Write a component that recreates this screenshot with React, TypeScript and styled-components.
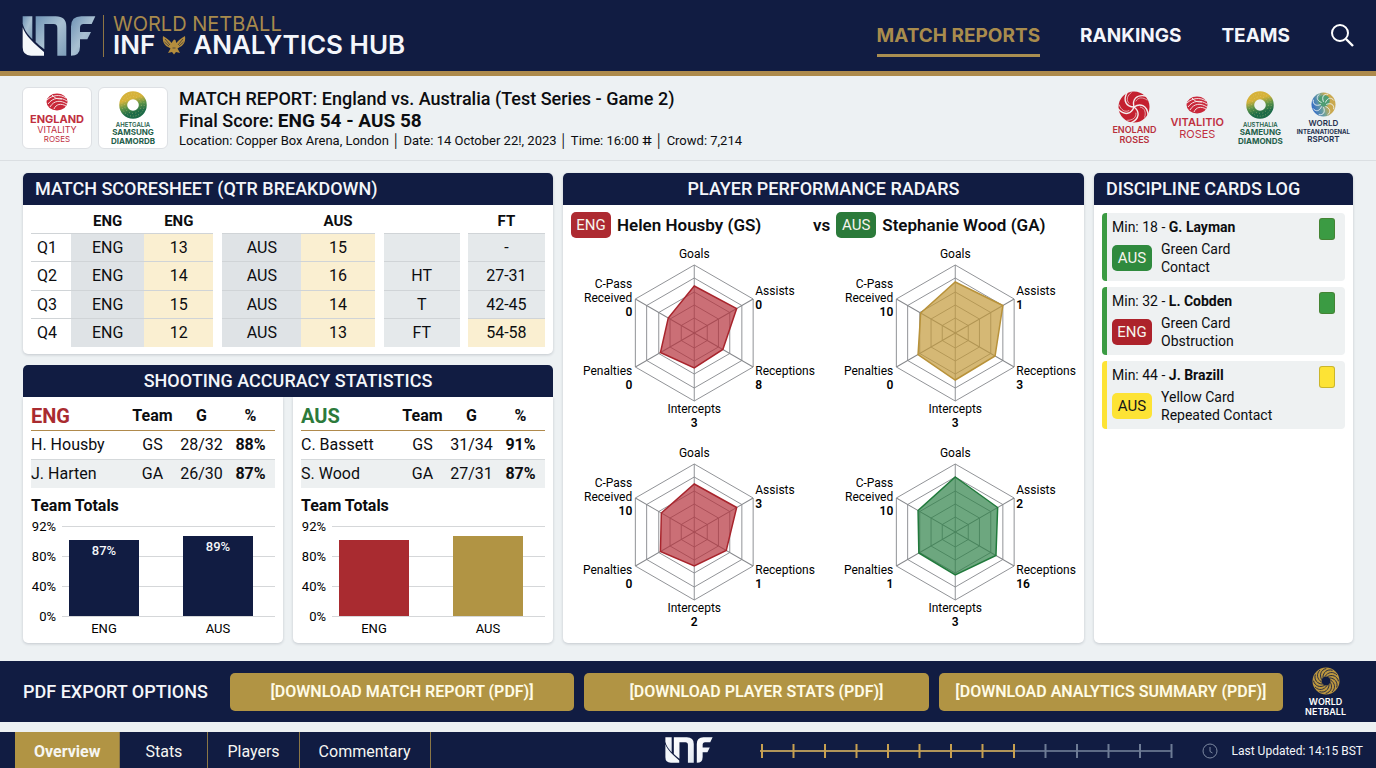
import { ReactNode } from 'react'
import styled, { createGlobalStyle } from 'styled-components'

const NAVY = '#111c42'
const GOLD = '#b19444'
const RED = '#a92b30'
const GREEN = '#2c7a3b'

const quarters = [
  { q: 'Q1', eng: '13', aus: '15', label: '', score: '-' },
  { q: 'Q2', eng: '14', aus: '16', label: 'HT', score: '27-31' },
  { q: 'Q3', eng: '15', aus: '14', label: 'T', score: '42-45' },
  { q: 'Q4', eng: '12', aus: '13', label: 'FT', score: '54-58' },
]

const shooting = [
  {
    team: 'ENG',
    color: RED,
    rows: [
      { name: 'H. Housby', pos: 'GS', goals: '28/32', pct: '88%' },
      { name: 'J. Harten', pos: 'GA', goals: '26/30', pct: '87%' },
    ],
    bars: [
      { name: 'ENG', height: 76, label: '87%', color: NAVY },
      { name: 'AUS', height: 80, label: '89%', color: NAVY },
    ],
  },
  {
    team: 'AUS',
    color: GREEN,
    rows: [
      { name: 'C. Bassett', pos: 'GS', goals: '31/34', pct: '91%' },
      { name: 'S. Wood', pos: 'GA', goals: '27/31', pct: '87%' },
    ],
    bars: [
      { name: 'ENG', height: 76, label: '', color: RED },
      { name: 'AUS', height: 80, label: '', color: GOLD },
    ],
  },
]

// order: goals, assists, receptions, intercepts, penalties, c-pass
const radars = [
  { color: '#a8252d', fill: '#b5323c', radii: [47, 49, 33, 35, 39, 30], values: [0, 8, 3, 0, 0] },
  { color: '#b8923a', fill: '#c39a3a', radii: [51, 55, 46, 47, 43, 40], values: [1, 3, 3, 0, 10] },
  { color: '#a8252d', fill: '#b5323c', radii: [48, 49, 37, 34, 39, 38], values: [3, 1, 2, 0, 10] },
  { color: '#217a3c', fill: '#2f8149', radii: [55, 49, 47, 43, 42, 43], values: [2, 16, 3, 1, 10] },
]

const cards = [
  { min: 18, player: 'G. Layman', team: 'AUS', badge: '#2f8a3e', card: '#3b9b43', type: 'Green Card', reason: 'Contact' },
  { min: 32, player: 'L. Cobden', team: 'ENG', badge: '#ad222b', card: '#3b9b43', type: 'Green Card', reason: 'Obstruction' },
  { min: 44, player: 'J. Brazill', team: 'AUS', badge: '#fde335', card: '#fde335', type: 'Yellow Card', reason: 'Repeated Contact', dark: true },
]

const downloads = [
  '[DOWNLOAD MATCH REPORT (PDF)]',
  '[DOWNLOAD PLAYER STATS (PDF)]',
  '[DOWNLOAD ANALYTICS SUMMARY (PDF)]',
]

function InfLogo ({ width, height, light }: { width: number, height: number, light?: boolean }) {
  const id = light ? 'inf-light' : 'inf-steel'
  return (
    <svg width={width} height={height} viewBox="66 42 220 120" role="img" aria-label="INF">
      <defs>
        <linearGradient id={id} x1="0" y1="0" x2="1" y2="1">
          <stop offset="0" stopColor={light ? '#ffffff' : '#6f93b5'} />
          <stop offset="0.5" stopColor={light ? '#f2f5fa' : '#a9c0d2'} />
          <stop offset="1" stopColor={light ? '#dfe6ef' : '#7d9db9'} />
        </linearGradient>
      </defs>
      <path fill={`url(#${id})`} d="M67 43H96V112C82 98 70 82 67 64Z" />
      <path fill="#f4f7fa" d="M67 76C74 100 104 128 131 150V161H92Q67 161 67 136Z" />
      <path fill={`url(#${id})`} d="M106 43H166Q198 43 198 74V161H171V78Q171 66 160 66H132V142C122 134 112 126 106 120Z" />
      <path fill={`url(#${id})`} d="M285 43L274 66H250Q239 66 239 78V90H272L261 112H239V134Q239 161 212 161V74Q212 43 243 43Z" />
    </svg>
  )
}

function Eagle () {
  return (
    <svg width="24" height="20" viewBox="0 0 24 20" fill="#b58d3d" aria-hidden="true">
      <path d="M1 1C4 3 8 5 9.500 8L10.500 6.500L12 4.500L13.500 5L14 7L14.500 8C16 5 20 3 23 1C24 7 21 11 17 12.500L15.500 13.500L18 18L14 17L12 19.500L10 17L6 18L8.500 13.500L7 12.500C3 11 0 7 1 1Z" />
      <path stroke={NAVY} strokeWidth="0.6" fill="none" d="M3 4L8 10M2.500 7L7 11M21 4L16 10M21.500 7L17 11M10.500 13H13.500" />
    </svg>
  )
}

function Rose () {
  return (
    <svg width="32" height="32" viewBox="0 0 32 32" aria-hidden="true">
      <circle cx="16" cy="16" r="15.500" fill="#c4202f" />
      {[0, 72, 144, 216, 288].map(a => (
        <g key={a} transform={`rotate(${a} 16 16)`} fill="none" stroke="#f4eeee" strokeLinecap="round">
          <path strokeWidth="1.400" d="M16 16C14 9 18 3 28 5" />
          <path strokeWidth="0.600" d="M18 10C20 6 25 6 29 9" />
        </g>
      ))}
    </svg>
  )
}

function Bud () {
  return (
    <svg width="22" height="18" viewBox="0 0 22 18" aria-hidden="true">
      <ellipse cx="11" cy="9" rx="10.500" ry="8.500" fill="#c9283a" />
      <g fill="none" stroke="#f7f0f0" strokeWidth="0.900">
        <path d="M1 7C6 2 14 1 20 5" />
        <path d="M2 11C7 4 15 4 21 8" />
        <path d="M4 14C8 7 15 7 21 11" />
        <path d="M8 16C10 11 15 10 20 13" />
        <path d="M6 2C9 5 10 6 16 6" />
      </g>
    </svg>
  )
}

function Diamond ({ id }: { id: string }) {
  return (
    <svg width="28" height="28" viewBox="0 0 30 30" aria-hidden="true">
      <defs>
        <linearGradient id={id} x1="0.300" y1="0" x2="0.600" y2="1">
          <stop offset="0.200" stopColor="#d6b23a" />
          <stop offset="0.550" stopColor="#5b9348" />
          <stop offset="0.900" stopColor="#1d6b48" />
        </linearGradient>
      </defs>
      <circle cx="15" cy="15" r="10.500" fill="none" stroke={`url(#${id})`} strokeWidth="8.500" />
      <circle cx="15" cy="15" r="12" fill="none" stroke="#e7d98c" strokeWidth="0.500" strokeDasharray="1 2" />
      <circle cx="15" cy="15" r="9" fill="none" stroke="#e7d98c" strokeWidth="0.500" strokeDasharray="1 2.500" />
    </svg>
  )
}

function Globe () {
  return (
    <svg width="25" height="25" viewBox="0 0 26 26" aria-hidden="true">
      <defs>
        <linearGradient id="globe" x1="0" y1="0.700" x2="1" y2="0.400">
          <stop offset="0.100" stopColor="#3a72c2" />
          <stop offset="0.450" stopColor="#6fa39a" />
          <stop offset="0.700" stopColor="#caa94f" />
        </linearGradient>
      </defs>
      <circle cx="13" cy="13" r="12.500" fill="url(#globe)" />
      <circle cx="13.500" cy="9" r="6" fill="#4f9d74" />
      {[0, 45, 90, 135, 180, 225, 270, 315].map(a => (
        <path
          key={a}
          transform={`rotate(${a} 13 13)`}
          d="M15 11C17 6 21 5 24 9"
          fill="none"
          stroke="#edf2f3"
          strokeWidth="0.900"
        />
      ))}
    </svg>
  )
}

function GoldRing () {
  return (
    <svg width="28" height="28" viewBox="0 0 28 28" aria-hidden="true">
      <circle cx="14" cy="14" r="9" fill="none" stroke="#bb963f" strokeWidth="9" />
      {Array.from({ length: 12 }, (_, i) => (
        <path
          key={i}
          transform={`rotate(${i * 30} 14 14)`}
          d="M13 9.500C16 5 21 4 25 8"
          fill="none"
          stroke={NAVY}
          strokeWidth="0.800"
        />
      ))}
    </svg>
  )
}

function BarChart ({ bars }: { bars: typeof shooting[0]['bars'] }) {
  return (
    <Chart viewBox="0 0 244 122" role="img" aria-label="Team totals">
      {['92%', '80%', '40%', '0%'].map((tick, i) => (
        <g key={tick}>
          <line x1="31" x2="244" y1={10.5 + i * 30} y2={10.5 + i * 30} stroke="#d5d7d9" />
          <text x="25" y={15 + i * 30} textAnchor="end">{tick}</text>
        </g>
      ))}
      {bars.map(({ name, height, label, color }, i) => (
        <g key={name} textAnchor="middle">
          <rect x={38 + i * 114} y={100 - height} width="70" height={height} fill={color} />
          {label && <text className="value" x={73 + i * 114} y={115 - height}>{label}</text>}
          <text x={73 + i * 114} y="117">{name}</text>
        </g>
      ))}
    </Chart>
  )
}

function Radar ({ color, fill, radii, values }: typeof radars[0]) {
  const cx = 131
  const cy = 90
  const points = (r: number[]) =>
    r.map((v, i) => {
      const a = (i * Math.PI) / 3
      return `${(cx + v * Math.sin(a)).toFixed(1)},${(cy - v * Math.cos(a)).toFixed(1)}`
    }).join(' ')
  const [assists, receptions, intercepts, penalties, cpass] = values

  return (
    <RadarChart viewBox="0 0 260 199" role="img" aria-label="Player performance radar">
      <g fill="none" stroke="#85878b" strokeWidth="0.900">
        {[68, 55, 41, 28, 15].map(r => <polygon key={r} points={points(Array(6).fill(r))} />)}
        {[0, 1, 2].map(i => (
          <line key={i} x1={cx} x2={cx} y1={cy - 68} y2={cy + 68} transform={`rotate(${i * 60} ${cx} ${cy})`} />
        ))}
      </g>
      <polygon points={points(radii)} fill={fill} fillOpacity="0.700" stroke={color} strokeWidth="1.500" />
      <g textAnchor="middle">
        <text x={cx} y="15">Goals</text>
        <text x={cx} y="170">Intercepts</text>
        <text x={cx} y="184" className="value">{intercepts}</text>
      </g>
      <g>
        <text x={cx + 61} y="52">Assists</text>
        <text x={cx + 61} y="66" className="value">{assists}</text>
        <text x={cx + 61} y="132">Receptions</text>
        <text x={cx + 61} y="146" className="value">{receptions}</text>
      </g>
      <g textAnchor="end">
        <text x={cx - 62} y="45">C-Pass</text>
        <text x={cx - 62} y="59">Received</text>
        <text x={cx - 62} y="73" className="value">{cpass}</text>
        <text x={cx - 62} y="132">Penalties</text>
        <text x={cx - 62} y="146" className="value">{penalties}</text>
      </g>
    </RadarChart>
  )
}

function Timeline () {
  return (
    <svg width="416" height="16" viewBox="0 0 416 16" role="img" aria-label="Match timeline">
      <line x1="254" x2="412" y1="8" y2="8" stroke="#5d6b86" strokeWidth="2" />
      <line x1="0" x2="254" y1="8" y2="8" stroke="#b0955a" strokeWidth="2" />
      {Array.from({ length: 14 }, (_, i) => (
        <line
          key={i}
          x1={2 + i * 31.5}
          x2={2 + i * 31.5}
          y1="1"
          y2="15"
          stroke={i < 9 ? '#c7a050' : '#6d7b95'}
          strokeWidth="2"
        />
      ))}
    </svg>
  )
}

function Crest ({ icon, children }: { icon: ReactNode, children: ReactNode }) {
  return (
    <StyledCrest>
      {icon}
      {children}
    </StyledCrest>
  )
}

function App () {
  return (
    <Page>
      <GlobalStyle />
      <Header>
        <Brand>
          <InfLogo width={74} height={40} />
          <BrandText>
            <BrandTop>WORLD NETBALL</BrandTop>
            <BrandName>INF <Eagle /> ANALYTICS HUB</BrandName>
          </BrandText>
        </Brand>
        <Nav>
          <NavLink href="#reports" $active>MATCH REPORTS</NavLink>
          <NavLink href="#rankings">RANKINGS</NavLink>
          <NavLink href="#teams">TEAMS</NavLink>
          <SearchButton type="button" aria-label="Search">
            <svg width="24" height="24" viewBox="0 0 24 24" fill="none" stroke="#fff" strokeWidth="2">
              <circle cx="10" cy="9" r="8" />
              <path d="M16 15L23 22" strokeWidth="2.400" />
            </svg>
          </SearchButton>
        </Nav>
      </Header>

      <MatchBar>
        <Tile>
          <Crest icon={<Bud />}>
            <CrestText $size={11} $color="#c0303f" $weight={700}>ENGLAND</CrestText>
            <CrestText $size={9} $color="#c0303f">VITALITY</CrestText>
            <CrestText $size={8} $color="#c0303f">ROSES</CrestText>
          </Crest>
        </Tile>
        <Tile>
          <Crest icon={<Diamond id="aus-tile" />}>
            <CrestText $size={6} $color="#1e6049" $weight={600}>AHETGALIA</CrestText>
            <CrestText $size={8} $color="#1e6049" $weight={700}>SAMSUNG</CrestText>
            <CrestText $size={8} $color="#1e6049" $weight={700}>DIAMORDB</CrestText>
          </Crest>
        </Tile>
        <MatchInfo>
          <h1>MATCH REPORT: England vs. Australia (Test Series - Game 2)</h1>
          <h2>Final Score: <b>ENG 54 - AUS 58</b></h2>
          <p>Location: Copper Box Arena, London │ Date: 14 October 22!, 2023 │ Time: 16:00 ⵌ │ Crowd: 7,214</p>
        </MatchInfo>
        <Partners>
          <Crest icon={<Rose />}>
            <CrestText $size={9} $color="#b8303c" $weight={600}>ENOLAND</CrestText>
            <CrestText $size={9} $color="#b8303c" $weight={600}>ROSES</CrestText>
          </Crest>
          <Crest icon={<Bud />}>
            <CrestText $size={11} $color="#c0303f" $weight={600}>VITALITIO</CrestText>
            <CrestText $size={11} $color="#c0303f">ROSES</CrestText>
          </Crest>
          <Crest icon={<Diamond id="aus-partner" />}>
            <CrestText $size={6} $color="#1e6049" $weight={600}>AUSTHALIA</CrestText>
            <CrestText $size={8} $color="#1e6049" $weight={700}>SAMEUNG</CrestText>
            <CrestText $size={8} $color="#1e6049" $weight={700}>DIAMONDS</CrestText>
          </Crest>
          <Crest icon={<Globe />}>
            <CrestText $size={8} $color="#24304f" $weight={600}>WORLD</CrestText>
            <CrestText $size={6} $color="#24304f" $weight={700}>INTEANATIOENAL</CrestText>
            <CrestText $size={8} $color="#24304f" $weight={600}>RSPORT</CrestText>
          </Crest>
        </Partners>
      </MatchBar>

      <Main>
        <LeftColumn>
          <Panel>
            <PanelTitle $align="left">MATCH SCORESHEET (QTR BREAKDOWN)</PanelTitle>
            <PanelBody>
              <ScoreTable>
                <colgroup>
                  {[40, 73, 69, 9, 79, 73, 9, 76, 8, 77].map((w, i) => <col key={i} style={{ width: w }} />)}
                </colgroup>
                <thead>
                  <tr>
                    <th></th>
                    <th>ENG</th>
                    <th>ENG</th>
                    <th></th>
                    <th></th>
                    <th>AUS</th>
                    <th></th>
                    <th></th>
                    <th></th>
                    <th>FT</th>
                  </tr>
                </thead>
                <tbody>
                  {quarters.map(({ q, eng, aus, label, score }) => (
                    <tr key={q}>
                      <QuarterCell>{q}</QuarterCell>
                      <ScoreCell $tone="grey">ENG</ScoreCell>
                      <ScoreCell $tone="cream">{eng}</ScoreCell>
                      <td></td>
                      <ScoreCell $tone="grey">AUS</ScoreCell>
                      <ScoreCell $tone="cream">{aus}</ScoreCell>
                      <td></td>
                      <ScoreCell $tone="pale">{label}</ScoreCell>
                      <td></td>
                      <ScoreCell $tone={q === 'Q4' ? 'cream' : 'pale'}>{score}</ScoreCell>
                    </tr>
                  ))}
                </tbody>
              </ScoreTable>
            </PanelBody>
          </Panel>

          <Shooting>
            <PanelTitle>SHOOTING ACCURACY STATISTICS</PanelTitle>
            <ShootingGrid>
              {shooting.map(({ team, color, rows, bars }) => (
                <ShootingCard key={team}>
                  <ShotTable>
                    <colgroup>
                      <col style={{ width: 97 }} />
                      <col style={{ width: 49 }} />
                      <col style={{ width: 49 }} />
                      <col style={{ width: 49 }} />
                    </colgroup>
                    <thead>
                      <tr>
                        <TeamHead $color={color}>{team}</TeamHead>
                        <th>Team</th>
                        <th>G</th>
                        <th>%</th>
                      </tr>
                    </thead>
                    <tbody>
                      {rows.map(({ name, pos, goals, pct }) => (
                        <tr key={name}>
                          <td>{name}</td>
                          <td>{pos}</td>
                          <td>{goals}</td>
                          <td><b>{pct}</b></td>
                        </tr>
                      ))}
                    </tbody>
                  </ShotTable>
                  <h3>Team Totals</h3>
                  <BarChart bars={bars} />
                </ShootingCard>
              ))}
            </ShootingGrid>
          </Shooting>
        </LeftColumn>

        <Panel>
          <PanelTitle>PLAYER PERFORMANCE RADARS</PanelTitle>
          <Players>
            <Player>
              <Badge $bg="#ad2a31">ENG</Badge>
              Helen Housby (GS)
            </Player>
            <Player>
              <span>vs</span>
              <Badge $bg="#2b7a3a">AUS</Badge>
              Stephanie Wood (GA)
            </Player>
          </Players>
          <RadarGrid>
            {radars.map((radar, i) => <Radar key={i} {...radar} />)}
          </RadarGrid>
        </Panel>

        <Panel>
          <PanelTitle $align="left">DISCIPLINE CARDS LOG</PanelTitle>
          <CardList>
            {cards.map(({ min, player, team, badge, card, type, reason, dark }) => (
              <CardItem key={min} $color={card}>
                <div>
                  <p>Min: {min} - <b>{player}</b></p>
                  <CardDetail>
                    <Badge $bg={badge} $dark={dark}>{team}</Badge>
                    <p>{type}<br />{reason}</p>
                  </CardDetail>
                </div>
                <CardChip $color={card} />
              </CardItem>
            ))}
          </CardList>
        </Panel>
      </Main>

      <ExportBar>
        <h2>PDF EXPORT OPTIONS</h2>
        <Downloads>
          {downloads.map(label => <DownloadButton key={label} type="button">{label}</DownloadButton>)}
        </Downloads>
        <Crest icon={<GoldRing />}>
          <CrestText $size={9} $color="#fff" $weight={600}>WORLD</CrestText>
          <CrestText $size={9} $color="#fff" $weight={600}>NETBALL</CrestText>
        </Crest>
      </ExportBar>

      <Footer>
        <Tabs>
          <Tab type="button" $active>Overview</Tab>
          <Tab type="button">Stats</Tab>
          <Tab type="button">Players</Tab>
          <Tab type="button">Commentary</Tab>
        </Tabs>
        <InfLogo width={48} height={26} light />
        <Status>
          <Timeline />
          <Updated>
            <svg width="16" height="16" viewBox="0 0 16 16" fill="none" stroke="#7c88a0" aria-hidden="true">
              <circle cx="8" cy="8" r="7" />
              <path d="M8 4V8.500L10.500 10" />
            </svg>
            Last Updated: 14:15 BST
          </Updated>
        </Status>
      </Footer>
    </Page>
  )
}

const GlobalStyle = createGlobalStyle`
  * {
    box-sizing: border-box;
    margin: 0;
    padding: 0;
  }

  body {
    background-color: #edf1f3;
    color: #0c0d10;
    font-family: Roboto, 'Liberation Sans', sans-serif;
    font-size: 16px;
  }

  button {
    border: 0;
    font-family: inherit;
    cursor: pointer;
  }

  svg {
    display: block;
    flex-shrink: 0;
  }
`

const Page = styled.div`
  display: flex;
  flex-direction: column;
  min-height: 100vh;
`

const Header = styled.header`
  display: flex;
  justify-content: space-between;
  align-items: center;
  height: 76px;
  padding: 0 22px;
  border-bottom: 5px solid #ad8a4b;
  background-color: ${NAVY};
  font-family: Inter, sans-serif;
`

const Brand = styled.div`
  display: flex;
  align-items: center;
  gap: 7px;
`

const BrandText = styled.div`
  padding-left: 9px;
  border-left: 1px solid #8d7544;
`

const BrandTop = styled.div`
  color: #a88a4c;
  font-size: 20px;
  line-height: 18px;
`

const BrandName = styled.div`
  display: flex;
  align-items: center;
  gap: 7px;
  color: #f4f6fb;
  font-size: 26px;
  font-weight: 600;
  line-height: 24px;
`

const Nav = styled.nav`
  display: flex;
  align-items: center;
  gap: 40px;
`

const NavLink = styled.a<{ $active?: boolean }>`
  padding: 10px 0 6px;
  border-bottom: 3px solid ${props => props.$active ? '#a98e51' : 'transparent'};
  color: ${props => props.$active ? '#a98c4d' : '#f4f6fb'};
  font-size: 19px;
  font-weight: 700;
  line-height: 24px;
  text-decoration: none;
`

const SearchButton = styled.button`
  background: none;
`

const MatchBar = styled.section`
  display: flex;
  align-items: center;
  gap: 6px;
  height: 85px;
  padding: 0 26px 0 22px;
  border-bottom: 1px solid #dbdfe2;
`

const Tile = styled.div`
  display: flex;
  justify-content: center;
  align-items: center;
  width: 70px;
  height: 62px;
  border: 1px solid #dde0e4;
  border-radius: 6px;
  background-color: #fff;
`

const StyledCrest = styled.div`
  display: flex;
  flex-direction: column;
  align-items: center;
  font-family: Inter, sans-serif;

  svg {
    margin-bottom: 2px;
  }
`

const CrestText = styled.span<{ $size: number, $color: string, $weight?: number }>`
  color: ${props => props.$color};
  font-size: ${props => props.$size}px;
  font-weight: ${props => props.$weight || 400};
  line-height: ${props => props.$size + 1}px;
`

const MatchInfo = styled.div`
  flex: 1;
  padding-left: 5px;

  h1, h2 {
    font-size: 18px;
    font-weight: 500;
    line-height: 22px;
  }

  b {
    font-size: 19px;
    font-weight: 700;
  }

  p {
    font-size: 13px;
    line-height: 17px;
  }
`

const Partners = styled.div`
  display: flex;
  align-items: center;
  gap: 14px;
`

const Main = styled.main`
  flex: 1;
  display: grid;
  grid-template-columns: 530fr 521fr 259fr;
  gap: 10px;
  padding: 12px 23px 18px;
`

const LeftColumn = styled.div`
  display: flex;
  flex-direction: column;
  gap: 11px;
`

const Panel = styled.section`
  border-radius: 5px;
  background-color: #fff;
  box-shadow: 0 1px 3px rgba(30, 40, 60, 0.2);
`

const PanelTitle = styled.h2<{ $align?: string }>`
  padding: 0 12px;
  border-radius: 5px 5px 0 0;
  background-color: ${NAVY};
  color: #f4f6fa;
  font-size: 18px;
  font-weight: 500;
  line-height: 32px;
  text-align: ${props => props.$align || 'center'};
`

const PanelBody = styled.div`
  padding: 0 8px 7px;
`

const ScoreTable = styled.table`
  width: 100%;
  border-collapse: collapse;
  table-layout: fixed;

  tr {
    height: 28px;
  }

  tr:nth-child(even) {
    height: 29px;
  }

  th {
    font-size: 15px;
    font-weight: 700;
    vertical-align: bottom;
    line-height: 24px;
  }
`

const tones = {
  none: 'transparent',
  grey: '#dfe3e6',
  cream: '#faefd1',
  pale: '#e5e9eb',
}

const ScoreCell = styled.td<{ $tone?: keyof typeof tones }>`
  border-top: 1px solid #d0d4d7;
  background-color: ${props => tones[props.$tone || 'none']};
  text-align: center;
`

const QuarterCell = styled(ScoreCell)`
  padding-left: 6px;
  text-align: left;
`

const Shooting = styled.section`
  flex: 1;
  display: flex;
  flex-direction: column;
`

const ShootingGrid = styled.div`
  flex: 1;
  display: grid;
  grid-template-columns: 1fr 1fr;
  gap: 10px;
`

const ShootingCard = styled.div`
  padding: 0 8px;
  border-radius: 0 0 5px 5px;
  background-color: #fff;
  box-shadow: 0 1px 3px rgba(30, 40, 60, 0.2);

  h3 {
    padding-top: 8px;
    font-size: 16px;
    font-weight: 700;
    line-height: 20px;
  }
`

const ShotTable = styled.table`
  width: 100%;
  border-collapse: collapse;
  table-layout: fixed;

  tr {
    height: 29px;
  }

  thead tr {
    height: 33px;
    border-bottom: 1px solid #b08a4c;
  }

  th, td {
    text-align: center;
  }

  th {
    padding-top: 5px;
  }

  td:first-child {
    text-align: left;
  }

  tbody tr + tr {
    border-top: 1px solid #d5d9db;
    background-color: #edf0f1;
  }
`

const TeamHead = styled.th<{ $color: string }>`
  && {
    color: ${props => props.$color};
    font-size: 20px;
    text-align: left;
  }
`

const Chart = styled.svg`
  width: 100%;
  height: 122px;
  font-size: 13px;

  .value {
    fill: #f4f6fa;
    font-weight: 500;
  }
`

const Badge = styled.span<{ $bg: string, $dark?: boolean }>`
  flex-shrink: 0;
  width: 40px;
  border-radius: 5px;
  background-color: ${props => props.$bg};
  color: ${props => props.$dark ? '#15161a' : '#f6f4ee'};
  font-size: 15px;
  font-weight: 400;
  line-height: 26px;
  text-align: center;
`

const Players = styled.div`
  display: grid;
  grid-template-columns: 242fr 263fr;
  align-items: center;
  height: 38px;
  padding: 2px 8px 0;
`

const Player = styled.div`
  display: flex;
  align-items: center;
  gap: 6px;
  font-size: 17px;
  font-weight: 600;
  white-space: nowrap;
`

const RadarGrid = styled.div`
  display: grid;
  grid-template-columns: 1fr 1fr;
`

const RadarChart = styled.svg`
  width: 100%;
  height: 199px;
  font-size: 12px;

  .value {
    font-weight: 600;
  }
`

const CardList = styled.ul`
  display: flex;
  flex-direction: column;
  gap: 6px;
  padding: 8px;
  list-style: none;
`

const CardItem = styled.li<{ $color: string }>`
  display: flex;
  justify-content: space-between;
  padding: 5px 10px 5px 5px;
  border-left: 5px solid ${props => props.$color};
  border-radius: 4px;
  background-color: #eef1f2;
  font-size: 14px;
  line-height: 18px;
`

const CardDetail = styled.div`
  display: flex;
  align-items: center;
  gap: 9px;
  margin-top: 4px;
`

const CardChip = styled.span<{ $color: string }>`
  width: 16px;
  height: 22px;
  border: 1px solid rgba(90, 80, 20, 0.3);
  border-radius: 3px;
  background-color: ${props => props.$color};
`

const ExportBar = styled.section`
  display: flex;
  align-items: center;
  gap: 22px;
  height: 61px;
  margin-bottom: 10px;
  padding: 0 30px 0 23px;
  background-color: ${NAVY};

  h2 {
    color: #f4f6fa;
    font-size: 18px;
    font-weight: 500;
  }
`

const Downloads = styled.div`
  flex: 1;
  display: grid;
  grid-template-columns: repeat(3, 1fr);
  gap: 10px;
`

const DownloadButton = styled.button`
  height: 38px;
  border-radius: 5px;
  background-color: ${GOLD};
  color: #fffbe6;
  font-size: 16px;
  font-weight: 600;
  white-space: nowrap;
`

const Footer = styled.footer`
  display: grid;
  grid-template-columns: 1fr auto 1fr;
  align-items: center;
  height: 36px;
  padding: 0 13px 0 15px;
  background-color: ${NAVY};
`

const Tabs = styled.div`
  display: flex;
  align-self: stretch;
`

const Tab = styled.button<{ $active?: boolean }>`
  min-width: 88px;
  padding: 2px 19px 0;
  border-right: 1px solid #8a7645;
  background-color: ${props => props.$active ? GOLD : 'transparent'};
  color: #f6f6f2;
  font-size: 16px;
  font-weight: ${props => props.$active ? 700 : 400};
`

const Status = styled.div`
  display: flex;
  justify-content: flex-end;
  align-items: center;
  gap: 26px;
  padding-top: 2px;
`

const Updated = styled.div`
  display: flex;
  align-items: center;
  gap: 14px;
  color: #f4f6fa;
  font-size: 12px;
`

export default App
